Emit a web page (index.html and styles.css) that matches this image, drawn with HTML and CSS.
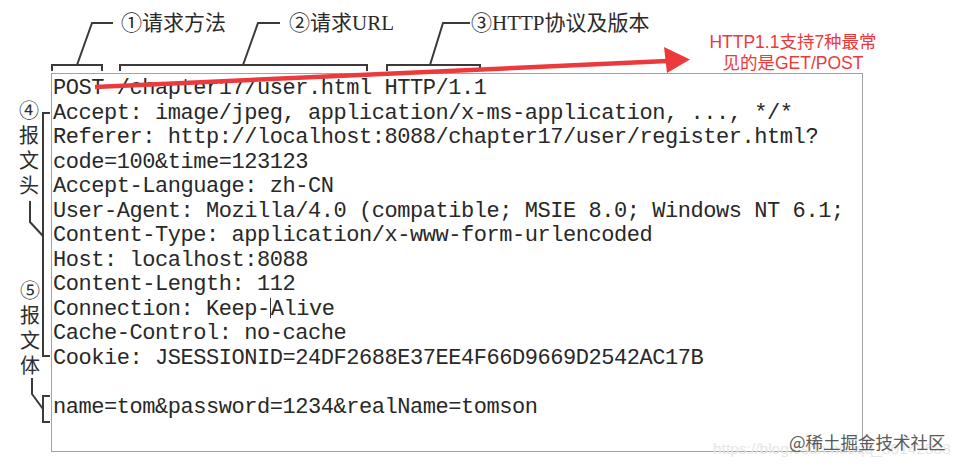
FILE: index.html
```html
<!DOCTYPE html>
<html lang="zh-CN">
<head>
<meta charset="utf-8">
<link rel="stylesheet" href="styles.css">
</head>
<body>
<div class="figure">
  <div class="code"><div class="line">POST /chapter17/user.html HTTP/1.1</div><div class="line">Accept: image/jpeg, application/x-ms-application, ..., */*</div><div class="line">Referer: http://localhost:8088/chapter17/user/register.html?</div><div class="line">code=100&amp;time=123123</div><div class="line">Accept-Language: zh-CN</div><div class="line">User-Agent: Mozilla/4.0 (compatible; MSIE 8.0; Windows NT 6.1;</div><div class="line">Content-Type: application/x-www-form-urlencoded</div><div class="line">Host: localhost:8088</div><div class="line">Content-Length: 112</div><div class="line">Connection: Keep-<span class="caret"></span>Alive</div><div class="line">Cache-Control: no-cache</div><div class="line">Cookie: JSESSIONID=24DF2688E37EE4F66D9669D2542AC17B</div><div class="line">&nbsp;</div><div class="line">name=tom&amp;password=1234&amp;realName=tomson</div></div>

  <div class="label label-method">①请求方法</div>
  <div class="label label-url">②请求URL</div>
  <div class="label label-proto">③HTTP协议及版本</div>

  <div class="side side-head"><span>④</span><span>报</span><span>文</span><span>头</span></div>
  <div class="side side-body"><span>⑤</span><span>报</span><span>文</span><span>体</span></div>

  <div class="note">HTTP1.1支持7种最常<br>见的是GET/POST</div>

  <div class="mark-faint">https://blog.csdn.net/qq_30142588</div>
  <div class="mark">@稀土掘金技术社区</div>

  <svg class="lines" width="965" height="470" viewBox="0 0 965 470">
    <g fill="none" stroke="#3a3a3a" stroke-width="2">
      <path d="M52 71 V65 H102 V71"/>
      <path d="M77 65 L92 23 H113"/>
      <path d="M120 71 V65 H367 V71"/>
      <path d="M243 65 L258 23 H280"/>
      <path d="M387 71 V65 H480 V71"/>
      <path d="M430 65 L443 23 H470"/>
      <path d="M50 113 H43 V356 H50"/>
      <path d="M30 201 V222 L43 236"/>
      <path d="M50 396 H43 V422 H50"/>
      <path d="M32 378 V394 L43 409"/>
    </g>
    <line x1="95" y1="87" x2="667" y2="61" stroke="#ec3a3c" stroke-width="4.5"/>
    <polygon points="690,59.5 664,47 667,73" fill="#ec3a3c"/>
  </svg>
</div>
</body>
</html>
```

FILE: styles.css
```css
html, body {
  margin: 0;
  padding: 0;
  background: #ffffff;
}

.figure {
  position: relative;
  width: 965px;
  height: 470px;
  overflow: hidden;
}

.code {
  box-sizing: border-box;
  margin: 73px 0 0 51px;
  width: 812px;
  height: 379px;
  border: 1px solid #a2a2a2;
  padding: 3px 0 0 1px;
  font-family: "Liberation Mono", monospace;
  font-size: 22px;
  letter-spacing: -0.45px;
  line-height: 24.5px;
  color: #282828;
  white-space: pre;
}

.line {
  height: 24.5px;
}

.caret {
  display: inline-block;
  width: 0;
  height: 20px;
  border-left: 1px solid #333;
  vertical-align: -3px;
}

.label {
  position: absolute;
  top: 10px;
  font-family: "Liberation Serif", "Noto Sans CJK SC", serif;
  font-size: 21px;
  line-height: 26px;
  color: #2a2a2a;
  white-space: nowrap;
}

.label-method { left: 121px; }
.label-url { left: 289px; }
.label-proto { left: 471px; }

.side {
  position: absolute;
  display: flex;
  flex-direction: column;
  align-items: center;
  width: 22px;
  font-family: "Liberation Serif", "Noto Sans CJK SC", serif;
  font-size: 20px;
  line-height: 25px;
  color: #2e2e2e;
}

.side-head { left: 18px; top: 99px; }
.side-body { left: 19px; top: 279px; }

.note {
  position: absolute;
  left: 698px;
  top: 32px;
  width: 190px;
  text-align: center;
  font-family: "Liberation Sans", "Noto Sans CJK SC", sans-serif;
  font-size: 17.5px;
  line-height: 21px;
  color: #ec3a3c;
}

.mark {
  position: absolute;
  left: 789px;
  top: 430px;
  font-family: "Noto Sans CJK SC", sans-serif;
  font-size: 17.5px;
  line-height: 24px;
  color: #5a5a5a;
  white-space: nowrap;
}

.mark-faint {
  position: absolute;
  left: 713px;
  top: 439px;
  font-family: "Liberation Sans", sans-serif;
  font-size: 15.5px;
  line-height: 20px;
  color: #e6e6e6;
  white-space: nowrap;
}

.lines {
  position: absolute;
  left: 0;
  top: 0;
}
```
